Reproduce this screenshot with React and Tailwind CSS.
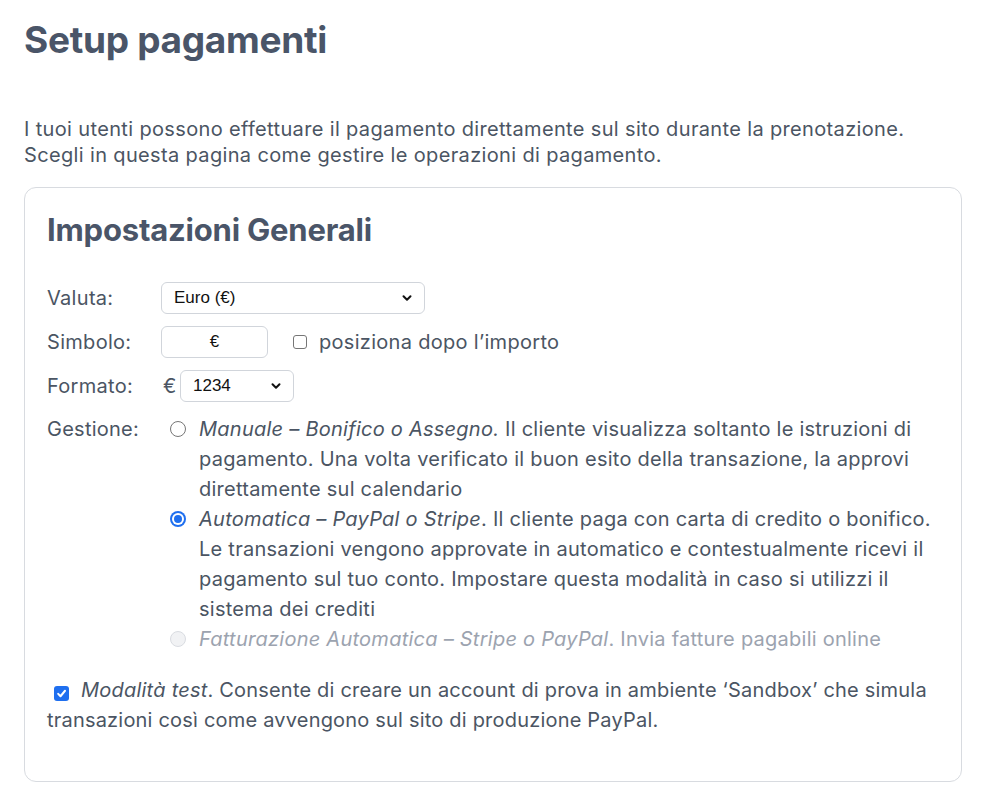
const Chevron = () => (
  <svg width="12" height="12" viewBox="0 0 12 12" fill="none" className="shrink-0">
    <path d="M2.5 4.2 6 7.7 9.5 4.2" stroke="#111" strokeWidth="2" strokeLinecap="round" strokeLinejoin="round" />
  </svg>
);

const Radio = ({ checked, disabled }) => {
  if (checked) {
    return (
      <span className="mt-[7px] w-[16px] h-[16px] rounded-full bg-[#1f6fef] flex items-center justify-center shrink-0">
        <span className="w-[12px] h-[12px] rounded-full bg-white flex items-center justify-center">
          <span className="w-[8px] h-[8px] rounded-full bg-[#1f6fef]" />
        </span>
      </span>
    );
  }
  return (
    <span
      className={`mt-[7px] w-[16px] h-[16px] rounded-full border shrink-0 ${disabled ? "border-[#d9dce1] bg-[#f1f2f4]" : "border-[#767676] bg-white"}`}
    />
  );
};

export default function App() {
  return (
    <div className="min-h-[804px] bg-white px-6 pt-[14px] font-['Inter',sans-serif] text-[#4b5563]">
      <h1 className="text-[37px] leading-[52px] font-bold text-[#4a5568] tracking-[-0.3px]">Setup pagamenti</h1>

      <p className="mt-[50px] text-[20px] leading-[26px] tracking-[0.35px]">
        I tuoi utenti possono effettuare il pagamento direttamente sul sito durante la prenotazione.
        <br />
        Scegli in questa pagina come gestire le operazioni di pagamento.
      </p>

      <div className="mt-[19px] w-[938px] h-[595px] border border-[#d8dbe0] rounded-xl px-[22px] pt-[20px]">
        <h2 className="text-[31px] leading-[44px] font-bold text-[#4a5568] tracking-[-0.2px]">Impostazioni Generali</h2>

        <div className="mt-[30px] flex flex-col gap-[12px] text-[20px] tracking-[0.3px]">
          <div className="flex items-center">
            <span className="w-[114px]">Valuta:</span>
            <div className="w-[264px] h-[32px] border border-[#d1d5db] rounded-md bg-white flex items-center justify-between pl-[12px] pr-[11px] font-['Liberation_Sans',sans-serif] text-[17px] tracking-normal text-[#111]">
              <span>Euro (€)</span>
              <Chevron />
            </div>
          </div>

          <div className="flex items-center">
            <span className="w-[114px]">Simbolo:</span>
            <div className="w-[107px] h-[32px] border border-[#d1d5db] rounded-md bg-white flex items-center justify-center font-['Liberation_Sans',sans-serif] text-[17px] tracking-normal text-[#111]">
              €
            </div>
            <span className="ml-[25px] w-[14px] h-[14px] border border-[#767676] rounded-[3px] bg-white shrink-0" />
            <span className="ml-[12px]">posiziona dopo l’importo</span>
          </div>

          <div className="flex items-center">
            <span className="w-[114px]">Formato:</span>
            <span className="w-[19px] pl-[2px]">€</span>
            <div className="w-[114px] h-[32px] border border-[#d1d5db] rounded-md bg-white flex items-center justify-between pl-[12px] pr-[11px] font-['Liberation_Sans',sans-serif] text-[17px] tracking-normal text-[#111]">
              <span>1234</span>
              <Chevron />
            </div>
          </div>
        </div>

        <div className="mt-[12px] flex text-[20px] leading-[30px] tracking-[0.25px]">
          <span className="w-[114px] shrink-0">Gestione:</span>
          <div className="flex flex-col">
            <div className="flex gap-[13px] pl-[9px]">
              <Radio />
              <p>
                <em>Manuale – Bonifico o Assegno.</em> Il cliente visualizza soltanto le istruzioni di pagamento. Una volta
                verificato il buon esito della transazione, la approvi direttamente sul calendario
              </p>
            </div>
            <div className="flex gap-[13px] pl-[9px]">
              <Radio checked />
              <p>
                <em>Automatica – PayPal o Stripe</em>. Il cliente paga con carta di credito o bonifico. Le transazioni
                vengono approvate in automatico e contestualmente ricevi il pagamento sul tuo conto. Impostare questa
                modalità in caso si utilizzi il sistema dei crediti
              </p>
            </div>
            <div className="flex gap-[13px] pl-[9px] text-[#9ca3af]">
              <Radio disabled />
              <p>
                <em>Fatturazione Automatica – Stripe o PayPal</em>. Invia fatture pagabili online
              </p>
            </div>
          </div>
        </div>

        <div className="mt-[21px] text-[20px] leading-[30px] tracking-[0.2px]">
          <span className="inline-flex align-[-2px] ml-[7px] mr-[12px] w-[15px] h-[15px] rounded-[3px] bg-[#1f6fef] items-center justify-center">
            <svg width="11" height="11" viewBox="0 0 10 10" fill="none">
              <path d="M2 5.3 4.1 7.5 8.2 2.5" stroke="white" strokeWidth="1.8" strokeLinecap="round" strokeLinejoin="round" />
            </svg>
          </span>
          <em>Modalità test</em>. Consente di creare un account di prova in ambiente ‘Sandbox’ che simula transazioni così
          come avvengono sul sito di produzione PayPal.
        </div>
      </div>
    </div>
  );
}
